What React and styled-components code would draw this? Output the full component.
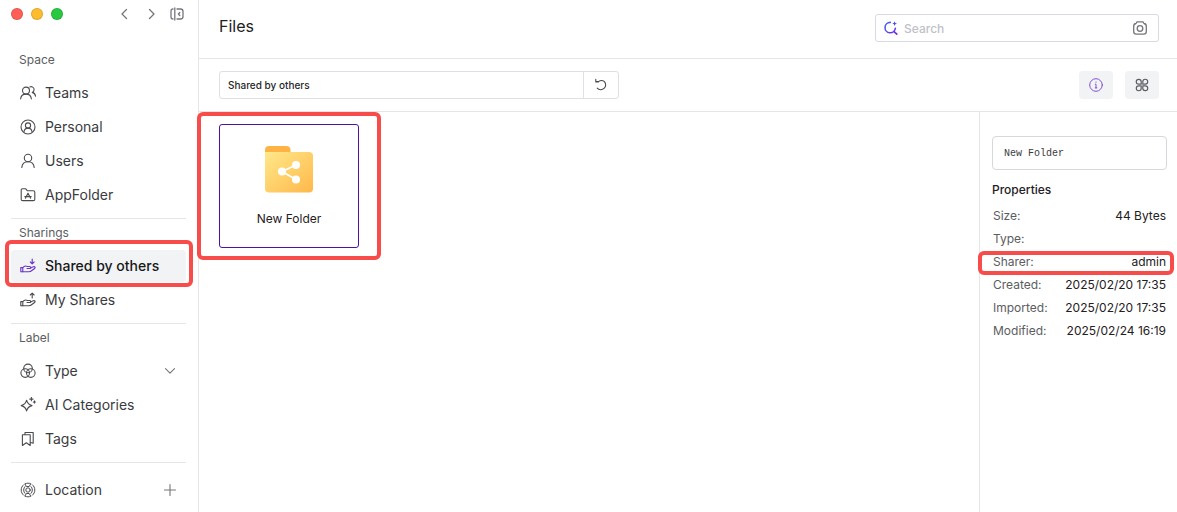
import React, { useState } from "react";
import styled, { createGlobalStyle } from "styled-components";

const GlobalStyle = createGlobalStyle`
  * {
    box-sizing: border-box;
  }

  body {
    margin: 0;
    background: #ffffff;
    color: #1f2023;
    font-family: "Inter", "Liberation Sans", sans-serif;
    font-size: 12px;
  }

  button,
  input {
    font-family: inherit;
  }
`;

const Page = styled.div`
  display: flex;
  min-height: 100vh;
`;

const Sidebar = styled.aside`
  flex: none;
  width: 199px;
  padding: 0 12px 6px 11px;
  border-right: 1px solid #e5e6e8;
`;

const WindowBar = styled.div`
  display: flex;
  align-items: center;
  height: 28px;
  margin-bottom: 18px;
`;

const Light = styled.span`
  width: 12px;
  height: 12px;
  margin-right: 8px;
  border: 1px solid rgba(0, 0, 0, 0.12);
  border-radius: 50%;
  background: ${(props) => props.$color};
`;

const WindowNav = styled.div`
  display: flex;
  gap: 10px;
  margin-left: auto;
  padding-right: 1px;
`;

const IconButton = styled.button`
  display: flex;
  align-items: center;
  justify-content: center;
  width: 16px;
  height: 16px;
  padding: 0;
  border: 0;
  background: none;
  color: #74767b;
  cursor: pointer;
`;

const Section = styled.section`
  padding-top: ${(props) => (props.$plain ? "11px" : "0")};

  & + & {
    margin-top: 7px;
    border-top: 1px solid #e5e6e8;
  }
`;

const SectionTitle = styled.h2`
  margin: 0 0 3px;
  padding-left: 8px;
  font-size: 12px;
  line-height: 28px;
  font-weight: 400;
  color: #5b5d61;
`;

const NavList = styled.ul`
  display: flex;
  flex-direction: column;
  gap: 2px;
  margin: 0;
  padding: 0;
  list-style: none;
`;

const NavItem = styled.li`
  position: relative;
  display: flex;
  align-items: center;
  height: 32px;
  padding: 0 8px;
  border-radius: 4px;
  background: ${(props) => (props.$active ? "#f2f3f5" : "none")};
`;

const NavLink = styled.a`
  display: flex;
  flex: 1;
  align-items: center;
  gap: 9px;
  font-size: 14px;
  line-height: 20px;
  font-weight: ${(props) => (props.$active ? 500 : 400)};
  color: ${(props) => (props.$active ? "#17181a" : "#3a3b3e")};
  text-decoration: none;
  white-space: nowrap;

  svg {
    flex: none;
    margin-left: 1px;
    color: ${(props) => (props.$active ? "#6a35c4" : "#4a4b4f")};
  }
`;

const Main = styled.main`
  display: flex;
  flex: 1;
  flex-direction: column;
  min-width: 0;
`;

const Header = styled.header`
  display: flex;
  justify-content: space-between;
  padding: 14px 18px 16px 20px;
  border-bottom: 1px solid #e5e6e8;
`;

const Title = styled.h1`
  margin: 0;
  font-size: 16px;
  line-height: 24px;
  font-weight: 400;
`;

const SearchBox = styled.div`
  display: flex;
  align-items: center;
  gap: 5px;
  width: 284px;
  height: 28px;
  padding: 0 10px 0 7px;
  border: 1px solid #d9d9e3;
  border-radius: 3px;
`;

const SearchInput = styled.input`
  flex: 1;
  min-width: 0;
  padding: 0;
  border: 0;
  outline: 0;
  background: none;
  font-size: 12px;
  font-weight: 500;

  &::placeholder {
    color: #bfc1c8;
    opacity: 1;
  }
`;

const Toolbar = styled.div`
  display: flex;
  justify-content: space-between;
  padding: 12px 18px 12px 20px;
  border-bottom: 1px solid #e5e6e8;
`;

const PathBox = styled.div`
  display: flex;
  width: 400px;
  height: 28px;
  border: 1px solid #dfdfe6;
  border-radius: 3px;
`;

const PathInput = styled.input`
  flex: 1;
  min-width: 0;
  padding: 0 8px;
  border: 0;
  outline: 0;
  background: none;
  font-size: 10px;
  font-weight: 500;
  color: #26272a;
`;

const RefreshButton = styled(IconButton)`
  width: 35px;
  height: 26px;
  border-left: 1px solid #dfdfe6;
  color: #4a4b4f;
`;

const ToolButtons = styled.div`
  display: flex;
  gap: 12px;
`;

const ToolButton = styled(IconButton)`
  width: 34px;
  height: 28px;
  border-radius: 4px;
  background: #f2f3f5;
  color: ${(props) => (props.$active ? "#8352d1" : "#5b5d61")};
`;

const Content = styled.div`
  display: flex;
  flex: 1;
`;

const FileGrid = styled.div`
  display: flex;
  flex: 1;
  flex-wrap: wrap;
  align-items: flex-start;
  align-content: flex-start;
  padding: 12px 20px;
`;

const FileCard = styled.button`
  position: relative;
  display: flex;
  flex-direction: column;
  align-items: center;
  gap: 16px;
  width: 140px;
  height: 124px;
  padding: 20px 0 0;
  border: 1px solid #4b12a3;
  border-radius: 3px;
  background: #ffffff;
  font-size: 12px;
  line-height: 20px;
  color: #1f2023;
  cursor: pointer;
`;

const Details = styled.aside`
  flex: none;
  width: 198px;
  padding: 24px 10px 24px 12px;
  border-left: 1px solid #e5e6e8;
`;

const NameInput = styled.input`
  display: block;
  width: 100%;
  height: 34px;
  padding: 0 11px;
  border: 1px solid #d8d8dc;
  border-radius: 4px;
  outline: 0;
  font-family: "Liberation Mono", monospace;
  font-size: 10px;
  color: #3a3b3e;
`;

const DetailsTitle = styled.h2`
  margin: 10px 0 4px;
  font-size: 12px;
  line-height: 20px;
  font-weight: 500;
`;

const PropertyList = styled.dl`
  margin: 0;
`;

const Property = styled.div`
  position: relative;
  display: flex;
  justify-content: space-between;
  padding: 0 1px;
  line-height: 23px;
`;

const PropertyName = styled.dt`
  color: #5b5d61;
`;

const PropertyValue = styled.dd`
  margin: 0;
`;

// red frame drawn over the part it points at
const Highlight = styled.span`
  position: absolute;
  inset: ${(props) => props.$inset};
  z-index: 1;
  border: 4px solid #f74c49;
  border-radius: 6px;
  pointer-events: none;
`;

function Icon({ width = 1.1, children }) {
  return (
    <svg
      width="16"
      height="16"
      viewBox="0 0 16 16"
      fill="none"
      stroke="currentColor"
      strokeWidth={width}
      strokeLinecap="round"
      strokeLinejoin="round"
      aria-hidden="true"
    >
      {children}
    </svg>
  );
}

const hand = (
  <>
    <path d="M.8 9.6h2v4.2h-2zM2.8 9.8c1-1.5 2.800-2.200 4.600-1.300h2.400c1.300 0 1.300 2 0 2H7" />
    <path d="M10.600 9.900l2.700-1.100c1.600-.6 2.400.8 1.200 1.700-2 1.700-3.600 3.300-6 3.300H2.800" />
  </>
);

const icons = {
  teams: (
    <Icon>
      <circle cx="6" cy="5.6" r="3.5" />
      <path d="M.6 14c.3-3 2.4-4.9 5.4-4.9s5.1 1.9 5.4 4.9M9.8 1.9c2-.8 4.3.5 4.3 2.7 0 1.4-.8 2.4-1.9 2.8 1.9.5 3.1 1.8 3.3 3.7" />
    </Icon>
  ),
  personal: (
    <Icon>
      <circle cx="8" cy="8" r="7" />
      <circle cx="8" cy="6.5" r="2.6" />
      <path d="M4 12.6c.4-2.2 1.9-3.5 4-3.5s3.6 1.3 4 3.5" />
    </Icon>
  ),
  users: (
    <Icon>
      <circle cx="8" cy="5" r="3.7" />
      <path d="M1.8 14.5c.3-3.4 2.7-5.8 6.2-5.8s5.9 2.4 6.2 5.8" />
    </Icon>
  ),
  appFolder: (
    <Icon>
      <path d="M1.2 3.2c0-.9.5-1.4 1.4-1.4h3.2l1.6 2h5.8c1 0 1.6.6 1.6 1.5v6.9c0 .9-.6 1.4-1.5 1.4H2.7c-.9 0-1.5-.5-1.5-1.4z" />
      <path d="M8 6.2l-2.600 5M8 6.200l2.600 5M4.800 9.600h6.400" />
    </Icon>
  ),
  sharedIn: (
    <Icon>
      {hand}
      <path d="M12.2 1v4.800M10.300 4l1.900 1.900L14.100 4" />
    </Icon>
  ),
  sharedOut: (
    <Icon>
      {hand}
      <path d="M12.2 6V1.200M10.300 3l1.900-1.900L14.100 3" />
    </Icon>
  ),
  type: (
    <Icon>
      <circle cx="8" cy="5.4" r="4.3" />
      <circle cx="5.2" cy="10.1" r="4.3" />
      <circle cx="10.8" cy="10.1" r="4.3" />
    </Icon>
  ),
  ai: (
    <Icon>
      <path d="M6.6 3.2c.7 3.3 2 4.6 5.4 5.4-3.4.8-4.7 2.1-5.4 5.4-.7-3.3-2-4.6-5.4-5.4 3.4-.8 4.7-2.1 5.4-5.4zM11.4.4v3.4M9.7 2.1h3.4M14.4 3.9v2.2M13.3 5h2.2" />
    </Icon>
  ),
  tags: (
    <Icon>
      <path d="M2.4 3.8h7.8v10.7l-3.9-2.7-3.9 2.7z" />
      <path d="M5 3.6V1.5h8.2v10.8l-2.8-.8" />
    </Icon>
  ),
  location: (
    <Icon width={1}>
      <path d="M3.6 2.800C2.100 4.100 1.200 5.900 1.200 8s.9 3.900 2.400 5.200M12.400 2.800c1.500 1.300 2.400 3.100 2.400 5.200s-.9 3.900-2.400 5.200" />
      <path d="M5.200 1.700c1.800-.7 3.800-.7 5.600 0L9.200 4.500H6.800zM5.200 14.300c1.800.7 3.800.7 5.600 0L9.200 11.500H6.800z" />
      <path d="M5 4.600C3.200 6.400 3.200 9.600 5 11.400M11 4.600c1.800 1.800 1.800 5 0 6.800" />
      <circle cx="8" cy="8" r="2.200" />
    </Icon>
  ),
};

const spaceItems = [
  { icon: "teams", label: "Teams" },
  { icon: "personal", label: "Personal" },
  { icon: "users", label: "Users" },
  { icon: "appFolder", label: "AppFolder" },
];

const sharingItems = [
  { icon: "sharedIn", label: "Shared by others", active: true },
  { icon: "sharedOut", label: "My Shares" },
];

const labelItems = [
  { icon: "type", label: "Type", action: "expand" },
  { icon: "ai", label: "AI Categories" },
  { icon: "tags", label: "Tags" },
];

const locationItems = [{ icon: "location", label: "Location", action: "add" }];

const properties = [
  { name: "Size:", value: "44 Bytes" },
  { name: "Type:", value: "" },
  { name: "Sharer:", value: "admin", marked: true },
  { name: "Created:", value: "2025/02/20 17:35" },
  { name: "Imported:", value: "2025/02/20 17:35" },
  { name: "Modified:", value: "2025/02/24 16:19" },
];

function NavAction({ type }) {
  if (type === "expand") {
    return (
      <IconButton aria-label="Expand types">
        <Icon>
          <path d="M3.5 5.7L8 10.1l4.5-4.4" />
        </Icon>
      </IconButton>
    );
  }
  return (
    <IconButton aria-label="Add location">
      <Icon>
        <path d="M8 2.5v11M2.5 8h11" />
      </Icon>
    </IconButton>
  );
}

function NavGroup(props) {
  const { title, items } = props;

  return (
    <Section $plain={!title}>
      {title && <SectionTitle>{title}</SectionTitle>}
      <NavList>
        {items.map((item) => (
          <NavItem key={item.label} $active={item.active}>
            <NavLink href="#" $active={item.active}>
              {icons[item.icon]}
              {item.label}
            </NavLink>
            {item.action && <NavAction type={item.action} />}
            {item.active && <Highlight $inset="-10px -7px -5px -6px" />}
          </NavItem>
        ))}
      </NavList>
    </Section>
  );
}

function FolderIcon() {
  return (
    <svg width="50" height="48" viewBox="0 0 50 48" aria-hidden="true">
      <defs>
        <linearGradient id="folder" x1="0" y1="0" x2="1" y2="1">
          <stop offset="0" stopColor="#ffe88a" />
          <stop offset="1" stopColor="#ffb84a" />
        </linearGradient>
      </defs>
      <path d="M1 12V5c0-2.5 1.5-4 4-4h17.5c2.5 0 4 1.5 4 4v7z" fill="#ffb344" />
      <path
        d="M1 7h44c2.6 0 4 1.4 4 4v32.5c0 2.5-1.5 4-4 4H5c-2.5 0-4-1.5-4-4z"
        fill="url(#folder)"
      />
      <path d="M32 20L18 26.5 32 34.5" fill="none" stroke="#ffffff" strokeWidth="1.8" />
      <circle cx="18" cy="26.5" r="4" fill="#ffffff" />
      <circle cx="32" cy="20" r="4" fill="#ffffff" />
      <circle cx="32" cy="34.5" r="4" fill="#ffffff" />
    </svg>
  );
}

export default function App() {
  const [search, setSearch] = useState("");
  const [name, setName] = useState("New Folder");

  return (
    <Page>
      <GlobalStyle />
      <Sidebar>
        <WindowBar>
          <Light $color="#ff5f57" />
          <Light $color="#febc2e" />
          <Light $color="#28c840" />
          <WindowNav>
            <IconButton aria-label="Back">
              <Icon width={1.3}>
                <path d="M9.5 3.5L5 8l4.5 4.5" />
              </Icon>
            </IconButton>
            <IconButton aria-label="Forward">
              <Icon width={1.3}>
                <path d="M6.5 3.5L11 8l-4.5 4.5" />
              </Icon>
            </IconButton>
            <IconButton aria-label="Toggle sidebar">
              <Icon width={1.3}>
                <path d="M4 3c-1.3 0-2 .7-2 2v6c0 1.3.7 2 2 2M5.8 2v12M8 3h3.5c1.7 0 2.5.8 2.5 2.5v5c0 1.7-.8 2.5-2.5 2.5H8M10.8 6.5L9.4 8l1.4 1.5" />
              </Icon>
            </IconButton>
          </WindowNav>
        </WindowBar>
        <nav>
          <NavGroup title="Space" items={spaceItems} />
          <NavGroup title="Sharings" items={sharingItems} />
          <NavGroup title="Label" items={labelItems} />
          <NavGroup items={locationItems} />
        </nav>
      </Sidebar>
      <Main>
        <Header>
          <Title>Files</Title>
          <SearchBox>
            <svg width="16" height="16" viewBox="0 0 16 16" fill="none" aria-hidden="true">
              <defs>
                <linearGradient id="search" x1="0" y1="0" x2="1" y2="1">
                  <stop offset="0" stopColor="#3b6cf6" />
                  <stop offset="1" stopColor="#7a24e8" />
                </linearGradient>
              </defs>
              <path
                d="M7.3 2.4A5.2 5.2 0 1 0 12.4 8.2M10.8 11.4l3 2.8"
                stroke="url(#search)"
                strokeWidth="1.6"
                strokeLinecap="round"
              />
              <path d="M11.6 1.2l.7 1.7 1.7.7-1.7.7-.7 1.7-.7-1.7-1.7-.7 1.7-.7z" fill="#4a4af2" />
            </svg>
            <SearchInput
              aria-label="Search"
              placeholder="Search"
              value={search}
              onChange={(e) => setSearch(e.target.value)}
            />
            <IconButton aria-label="Search by image">
              <Icon width={1.3}>
                <path d="M1.7 6.2c0-1.7.8-2.5 2.3-2.7l1-1.6h6l1 1.6c1.5.2 2.3 1 2.3 2.7v5.3c0 1.7-.9 2.6-2.6 2.6H4.3c-1.7 0-2.6-.9-2.6-2.6z" />
                <circle cx="8" cy="8.5" r="2.8" />
              </Icon>
            </IconButton>
          </SearchBox>
        </Header>
        <Toolbar>
          <PathBox>
            <PathInput aria-label="Path" value="Shared by others" readOnly />
            <RefreshButton aria-label="Refresh">
              <Icon>
                <path d="M2.8 2.4v2.500h2.600M3 4.600h2.400c2-1.300 4.400-1.300 6 0a4.600 4.600 0 1 1-7.200 6.500" />
              </Icon>
            </RefreshButton>
          </PathBox>
          <ToolButtons>
            <ToolButton aria-label="Details" $active>
              <Icon width={1}>
                <circle cx="8" cy="8" r="6.3" />
                <path d="M7.3 7.2H8v3.6M7.2 10.9h1.7M8 5v.3" />
              </Icon>
            </ToolButton>
            <ToolButton aria-label="Grid view">
              <Icon width={1.2}>
                <path d="M7.200 7.200H4.700a2.400 2.400 0 0 1 0-4.900h.1a2.400 2.400 0 0 1 2.400 2.400zM8.800 7.200V4.700a2.400 2.400 0 0 1 4.900 0v.1a2.400 2.400 0 0 1-2.400 2.400zM7.200 8.800v2.500a2.400 2.400 0 0 1-4.900 0v-.1a2.400 2.400 0 0 1 2.400-2.400zM8.800 8.800h2.500a2.400 2.400 0 0 1 0 4.900h-.1a2.400 2.400 0 0 1-2.400-2.400z" />
              </Icon>
            </ToolButton>
          </ToolButtons>
        </Toolbar>
        <Content>
          <FileGrid>
            <FileCard>
              <FolderIcon />
              New Folder
              <Highlight $inset="-13px -23px" />
            </FileCard>
          </FileGrid>
          <Details>
            <NameInput
              aria-label="Name"
              value={name}
              onChange={(e) => setName(e.target.value)}
            />
            <DetailsTitle>Properties</DetailsTitle>
            <PropertyList>
              {properties.map((item) => (
                <Property key={item.name}>
                  <PropertyName>{item.name}</PropertyName>
                  <PropertyValue>{item.value}</PropertyValue>
                  {item.marked && <Highlight $inset="1px -7px -2px -14px" />}
                </Property>
              ))}
            </PropertyList>
          </Details>
        </Content>
      </Main>
    </Page>
  );
}
